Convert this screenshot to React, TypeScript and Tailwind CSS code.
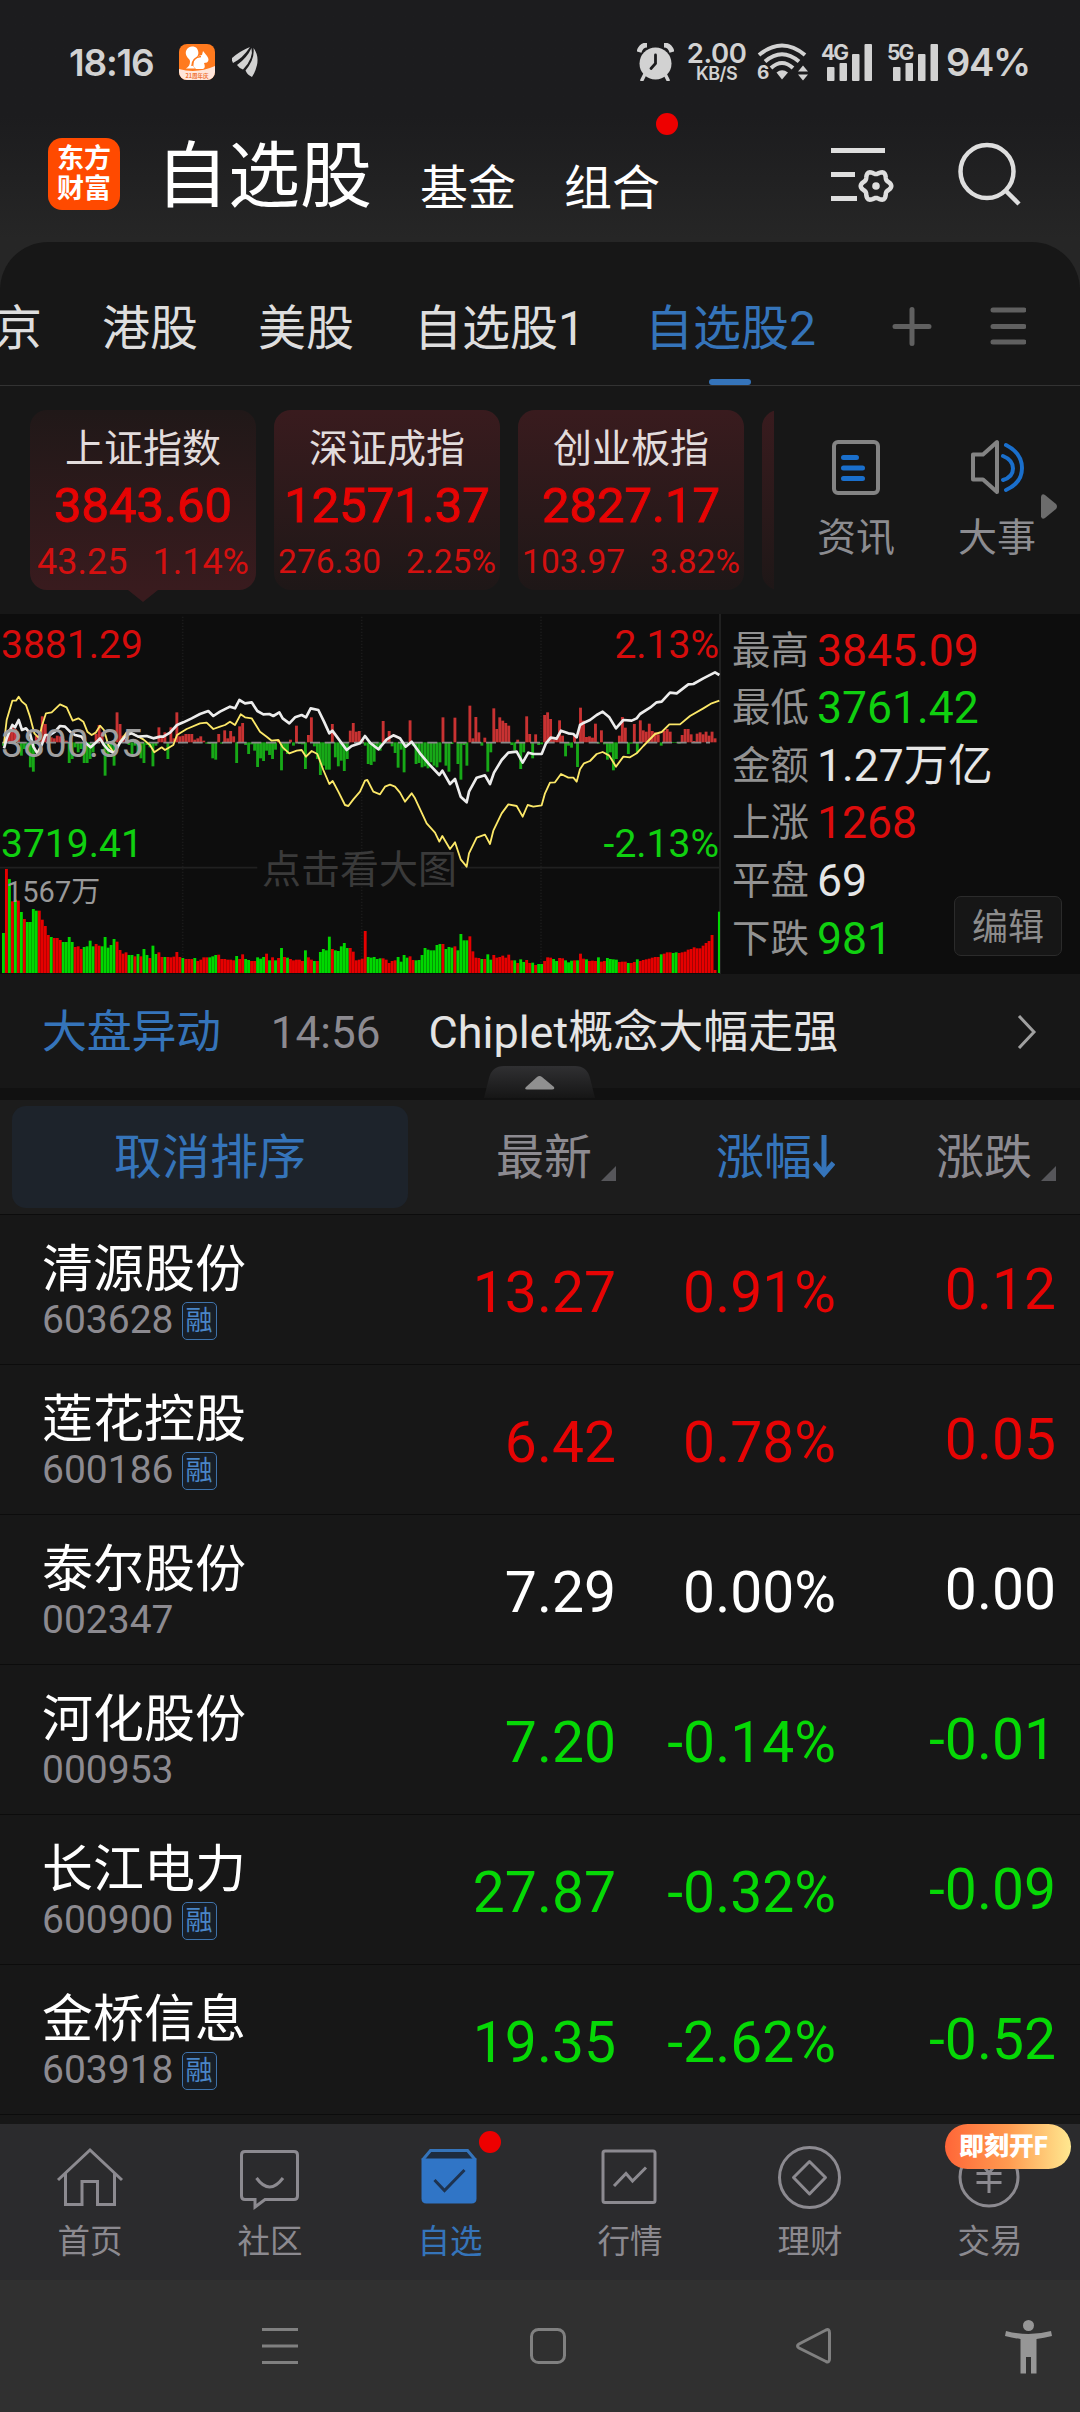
import type { ReactNode } from "react";

type IndexCard = { name: string; price: string; change: string; percent: string; active?: boolean };
type Stock = { name: string; code: string; margin: boolean; price: string; percent: string; change: string };

const indexCards: IndexCard[] = [
  { name: "上证指数", price: "3843.60", change: "43.25", percent: "1.14%", active: true },
  { name: "深证成指", price: "12571.37", change: "276.30", percent: "2.25%" },
  { name: "创业板指", price: "2827.17", change: "103.97", percent: "3.82%" },
];

const stats = [
  { label: "最高", value: "3845.09", color: "text-[#dc0c0c]" },
  { label: "最低", value: "3761.42", color: "text-[#10d010]" },
  { label: "金额", value: "1.27万亿", color: "text-[#e6e6e6]" },
  { label: "上涨", value: "1268", color: "text-[#dc0c0c]" },
  { label: "平盘", value: "69", color: "text-[#e6e6e6]" },
  { label: "下跌", value: "981", color: "text-[#10d010]" },
];

const stocks: Stock[] = [
  { name: "清源股份", code: "603628", margin: true, price: "13.27", percent: "0.91%", change: "0.12" },
  { name: "莲花控股", code: "600186", margin: true, price: "6.42", percent: "0.78%", change: "0.05" },
  { name: "泰尔股份", code: "002347", margin: false, price: "7.29", percent: "0.00%", change: "0.00" },
  { name: "河化股份", code: "000953", margin: false, price: "7.20", percent: "-0.14%", change: "-0.01" },
  { name: "长江电力", code: "600900", margin: true, price: "27.87", percent: "-0.32%", change: "-0.09" },
  { name: "金桥信息", code: "603918", margin: true, price: "19.35", percent: "-2.62%", change: "-0.52" },
];

// one entry per minute: volume, negative = falling minute
const volumes = [
  -120, 312, -282, 215, -220, 217, -183, 162, -153, -153, -192, -187, 187, 160, 141, 114, -108, 105, 105, 99,
  -93, -93, -108, -93, 78, 80, 72, -78, -80, -97, -80, 87, 82, -80, -108, -76, -84, -102, 94, 69,
  58, 62, -54, -54, 50, -57, 50, -72, -54, 45, -82, -57, 62, 48, -48, 48, 47, 49, 63, 48,
  -45, 42, 42, 42, -45, 36, 40, 47, 47, -47, -50, -54, 55, 42, 42, 40, 40, 38, -51, 42,
  56, -42, -39, 36, 36, -47, -43, -48, 58, -38, 47, -38, 45, -75, 48, -46, 42, 38, 40, 40,
  36, -68, 47, 40, -36, 36, -63, -72, -68, -109, 72, -68, -66, -80, -90, -75, 75, 64, 38, 40,
  43, 126, -48, -46, -48, -42, -44, 44, 40, 30, 36, 38, -48, -34, -54, -46, 50, 39, -38, -39,
  -54, -75, -70, -68, -68, -84, -87, 87, -72, -78, -76, 80, -68, -117, -98, -98, 110, 65, 46, 45,
  -42, 42, -56, -40, 54, 46, 48, 52, 46, 55, 38, -38, 30, -41, -33, 39, 30, -31, 24, -27,
  -27, 36, 47, 46, -42, -36, 45, 44, -38, -32, -37, 38, -38, 58, 43, -41, 36, 37, 36, -47,
  34, 36, -45, -42, -41, -40, 33, 34, 34, -30, 30, 33, -41, 36, 39, 41, 43, 46, 48, 48,
  -56, 58, 62, 62, -60, -62, 60, 62, 64, 70, 72, 77, 74, 74, 82, 90, 96, 114, 9, -184,
];

// minute momentum around the previous close
const momentum = [
  -10, 15, 40, 50, 40, 25, -40, -20, -10, -75, -88, 20, 25, 78, 55, 20, 15, 12, 20, 18,
  10, 5, -62, -50, -15, -30, -20, -62, -62, -50, -30, 25, 52, 30, -100, -40, -20, -70, 90, 55,
  20, 10, -8, -40, -10, -35, -48, -62, -8, -15, -72, -10, 45, 15, 30, -50, 45, 12, 90, 18,
  20, 25, 25, 25, 8, 12, 18, 5, -4, -5, -48, -52, 25, -4, 36, 12, 34, 18, -62, 48,
  58, -8, -35, -6, -25, -74, -48, -56, -25, -38, -50, -22, 8, -84, -25, -35, 8, -10, 50, -5,
  -6, -80, 22, 75, -12, -50, -98, -70, -82, -82, 55, -45, -72, -55, -86, -50, 35, 58, 32, 34,
  10, -10, -65, -68, -58, -20, -25, 64, 10, 34, -12, -32, -76, -22, -90, -8, 66, -10, -65, -62,
  -75, -72, -78, -60, -70, -75, -60, 75, -70, -88, -5, 74, -65, -112, -8, -70, 110, 12, 76, 30,
  -10, 14, -88, -30, 102, 40, 75, 65, 58, 50, -8, -24, 8, -80, -30, 78, 25, -48, 24, -8,
  -6, 82, 90, 70, 8, 12, 66, 20, -42, -10, -16, 20, -74, 104, 65, 16, 18, 14, 56, -4,
  36, -6, -52, -30, -84, -50, 20, 76, 44, -35, -4, 55, -30, 66, 36, 32, 56, 34, 30, 24,
  -10, 34, 40, 32, -2, -2, -4, 22, 40, 40, 24, 4, 26, 30, 24, 32, 20, 32, 12, 0,
];

const priceLine =
  "12,415 20,385 28,365 37,345 45,352 56,330 66,360 78,355 90,370 100,410 112,430 125,405 136,375 150,375 165,365 180,348 195,350 210,365 225,375 245,380 258,400 272,412 285,400 300,385 312,405 325,420 343,430 360,398 380,375 395,370 415,380 440,378 460,385 480,380 490,380 510,368 531,345 550,337 575,325 600,312 625,303 640,318 660,305 690,290 705,295 718,270 735,280 755,277 772,303 790,313 808,312 820,318 838,307 848,325 868,340 885,322 905,315 918,322 932,295 955,300 972,335 988,370 997,362 1012,382 1040,420 1055,408 1080,400 1095,378 1110,398 1135,418 1160,388 1180,376 1200,385 1217,410 1235,395 1260,430 1285,460 1318,495 1327,482 1350,522 1365,507 1382,560 1400,577 1407,545 1430,503 1455,496 1470,522 1482,488 1505,450 1525,428 1550,425 1568,458 1585,428 1600,432 1625,432 1638,400 1652,383 1670,386 1683,362 1705,370 1720,372 1730,382 1740,345 1752,338 1770,330 1790,315 1808,305 1828,322 1848,355 1870,330 1895,332 1910,325 1920,312 1950,293 1970,277 1985,275 2010,248 2030,250 2065,223 2080,222 2110,205 2145,187 2158,195";

const averageLine =
  "12,400 20,330 37,272 48,272 56,260 66,275 78,285 90,320 103,370 118,385 125,350 138,310 155,307 180,283 200,292 218,332 235,325 250,335 262,365 275,375 287,368 300,347 312,360 325,405 343,430 360,395 380,367 400,372 430,388 450,405 463,427 485,412 495,420 520,405 531,375 560,357 600,340 620,338 640,357 660,350 675,345 690,335 705,345 722,313 735,322 755,325 780,365 800,380 815,392 835,390 848,412 868,430 890,422 905,420 918,440 935,423 952,432 970,480 988,522 998,513 1015,545 1035,585 1045,588 1060,568 1080,545 1095,512 1102,510 1120,545 1140,553 1155,530 1170,524 1185,530 1200,548 1215,575 1235,550 1245,565 1280,640 1305,668 1318,695 1327,678 1350,717 1365,697 1382,748 1400,770 1407,730 1430,683 1455,674 1470,702 1480,662 1505,610 1525,583 1550,588 1568,620 1583,585 1600,590 1625,586 1635,550 1650,518 1665,517 1683,492 1705,503 1720,503 1730,515 1740,478 1752,460 1770,453 1790,432 1808,426 1828,437 1848,470 1870,440 1890,442 1910,430 1930,408 1965,372 1985,366 2008,343 2040,343 2070,318 2110,295 2135,280 2158,272";

// six-lobed cog outline
const cogPoints = Array.from({ length: 72 }, (_, i) => {
  const a = (i * Math.PI) / 36;
  const r = 13.6 + 1.7 * Math.cos(6 * a);
  return `${(45 + r * Math.cos(a)).toFixed(2)},${(44 + r * Math.sin(a)).toFixed(2)}`;
}).join(" ");

const trendColor = (value: string) => {
  if (value.startsWith("-")) return "text-[#06d806]";
  return parseFloat(value) === 0 ? "text-white" : "text-[#e60404]";
};

function SignalBars({ label }: { label: string }) {
  return (
    <div className="relative h-[37px] w-[51px]">
      <span className="absolute -top-[1px] left-0 font-[Inter] text-[21px] leading-[19px] font-bold tracking-[-2px]">{label}</span>
      <svg className="absolute right-0 bottom-0" width="45" height="37" fill="#d2d2d2">
        <rect x="0" y="23" width="7.5" height="14" rx="1" />
        <rect x="12.5" y="19" width="7.5" height="18" rx="1" />
        <rect x="25" y="10" width="7.5" height="27" rx="1" />
        <rect x="37.5" y="0" width="7.5" height="37" rx="1" />
      </svg>
    </div>
  );
}

function StatusBar() {
  return (
    <div className="flex h-[124px] items-center pr-[50px] pl-[69px] font-[Inter] text-[#d2d2d2]">
      <span className="w-[110px] text-[37px] leading-none font-semibold tracking-[-1.2px]">18:16</span>
      <svg width="36" height="36" viewBox="0 0 36 36">
        <rect width="36" height="36" rx="8" fill="#ff7a1e" />
        <path d="M0 25q18 5 36-3v6a8 8 0 0 1-8 8H8a8 8 0 0 1-8-8z" fill="#ffe6da" />
        <path d="M13 2.500c-4 0-7 4-6 8 1 4 4 4 4 7 0 3-1 5-4 7h9c-3-3-3-8 1-11 3-2 3-6 1-9-1-1.500-3-2-5-2z" fill="#fff" />
        <path d="M15 17q4-6 8-6l1-4 4 5q3 4 0 6.500l-3 .5q2 5-1 6h-7q-4-3-2-8z" fill="#fff" />
        <path d="M13 22c0-5 3-9 9-9.500" stroke="#ff7a1e" strokeWidth="1.500" fill="none" />
        <text x="18" y="33.500" fontSize="5.500" fontWeight="700" textAnchor="middle" fill="#f0763a" fontFamily="Noto Sans CJK SC, sans-serif">
          21周年庆
        </text>
      </svg>
      <svg className="ml-[17px]" width="26" height="30" viewBox="0 0 26 30" fill="#d2d2d2">
        <path d="M0 11Q8 4 18 0Q11 11 1 16Q-.5 13 0 11z" />
        <path d="M5 18Q15 11 19.500 1Q22 11 11 22.500Q7 21 5 18z" />
        <path d="M13.500 23.500Q23 12 21.500 1Q27 8 25 18Q23 26 20 30Q15.500 28 13.500 23.500z" />
      </svg>
      <div className="flex-1" />
      <svg width="37" height="38" viewBox="0 0 37 38">
        <path d="M8 31l-3 6M28 31l3 6" stroke="#d2d2d2" strokeWidth="3.500" strokeLinecap="round" />
        <circle cx="18.500" cy="20.500" r="16" fill="#d2d2d2" />
        <path d="M2 9Q4 2 10 2M35 9Q33 2 27 2" stroke="#d2d2d2" strokeWidth="5" fill="none" />
        <path d="M18.500 12v8.500l-4.500 5" stroke="#1c1c1e" strokeWidth="2.800" fill="none" strokeLinecap="round" />
      </svg>
      <div className="ml-[13px] flex w-[59px] flex-col items-center font-semibold">
        <span className="text-[27.5px] leading-[24px] tracking-[-0.4px]">2.00</span>
        <span className="text-[18px] leading-[18px] tracking-[-0.5px]">KB/S</span>
      </div>
      <div className="relative ml-[11px] h-[38px] w-[52px]">
        <span className="absolute -bottom-[1px] left-0 text-[19px] leading-[18px] font-bold">6</span>
        <svg className="absolute inset-0" width="52" height="38" viewBox="0 0 52 38" fill="none" stroke="#d2d2d2" strokeWidth="4">
          <path d="M2 12Q25-7 48 12" />
          <path d="M8 18.500Q25 4 42 18.500" />
          <path d="M14 25Q25 15 36 25" />
          <path d="M19.500 29.500Q25 25 31 29.500L25 36.500z" fill="#d2d2d2" stroke="none" />
          <path d="M41 28.500h10l-5-6zM41 31.500h10l-5 6z" fill="#d2d2d2" stroke="none" />
        </svg>
      </div>
      <div className="ml-3 flex gap-[15px]">
        <SignalBars label="4G" />
        <SignalBars label="5G" />
      </div>
      <span className="ml-[8px] text-[38px] leading-none font-semibold tracking-[-1.3px]">94%</span>
    </div>
  );
}

function TitleBar() {
  return (
    <div className="flex h-[118px] items-start pl-12 text-white">
      <div className="mt-[14px] flex h-[72px] w-[72px] flex-col items-center justify-center rounded-[14px] bg-[#ff4a00] text-[27px] leading-[30px] font-bold">
        <span>东方</span>
        <span>财富</span>
      </div>
      <h1 className="ml-9 pt-[3px] text-[72px] leading-[100px]">自选股</h1>
      <span className="ml-[48px] pt-[35px] text-[48px] leading-[60px]">基金</span>
      <div className="relative ml-12 pt-[35px] text-[48px] leading-[60px]">
        组合
        <span className="absolute -top-[11px] left-[92px] h-[22px] w-[22px] rounded-full bg-[#ee0000]" />
      </div>
      <svg className="mt-[18px] ml-[171px]" width="64" height="64" viewBox="0 0 64 64" fill="none" stroke="#dedede" strokeWidth="5">
        <path d="M0 8.500h54M0 32.500h24M0 56.500h26" />
        <polygon points={cogPoints} strokeWidth="4.500" strokeLinejoin="round" />
        <circle cx="45" cy="44" r="3.800" fill="#dedede" stroke="none" />
      </svg>
      <svg className="mt-[18px] ml-[63px]" width="64" height="64" viewBox="0 0 64 64" fill="none" stroke="#dedede" strokeWidth="4.500">
        <circle cx="29" cy="29.500" r="26.500" />
        <path d="M47 48l14 14" />
      </svg>
    </div>
  );
}

function GroupTabs() {
  return (
    <div className="relative flex h-[144px] items-start border-b border-[#333] pt-[57px] text-[48px] leading-[60px] whitespace-nowrap text-[#dedede]">
      <div className="-ml-[6px] flex gap-[60px]">
        <span>京</span>
        <span>港股</span>
        <span>美股</span>
        <span>自选股1</span>
        <div className="relative text-[#3574ba]">
          自选股2
          <span className="absolute top-[80px] left-[64px] h-[6px] w-[42px] rounded-full bg-[#3574ba]" />
        </div>
      </div>
      <div className="flex-1" />
      <svg className="mt-[8px] mr-[54px]" width="136" height="40" viewBox="0 0 136 40" stroke="#606060" strokeWidth="5" strokeLinecap="round">
        <path d="M5 19.500h34M22 2.500v34M103 3h31M103 19.500h31M103 35h31" />
      </svg>
    </div>
  );
}

function Card({ card }: { card: IndexCard }) {
  return (
    <div
      className={`relative flex h-[180px] w-[226px] shrink-0 flex-col items-center rounded-[17px] whitespace-nowrap ${
        card.active ? "bg-linear-to-b from-[#201818] to-[#391b1e]" : "bg-linear-to-b from-[#391b1e] to-[#1e1717]"
      }`}
    >
      <span className="mt-[15px] text-[39px] leading-[48px] text-[#e2dcdc]">{card.name}</span>
      <span className="mt-[5px] text-[49px] leading-[56px] text-[#e60404] [-webkit-text-stroke:1px_#e60404]">{card.price}</span>
      <div
        className={`mt-[8px] flex gap-[25px] leading-[40px] text-[#d41010] ${card.active ? "text-[36px]" : "text-[33.5px]"}`}
      >
        <span>{card.change}</span>
        <span>{card.percent}</span>
      </div>
      {card.active && (
        <svg className="absolute top-[180px] left-[98px]" width="30" height="12" fill="#391b1e">
          <path d="M0 0h30L15 12z" />
        </svg>
      )}
    </div>
  );
}

function IndexStrip() {
  return (
    <div className="flex h-[228px] pt-6">
      <div className="flex w-[774px] gap-[18px] overflow-hidden pl-[30px]">
        {indexCards.map((card) => (
          <Card key={card.name} card={card} />
        ))}
        <div className="h-[180px] w-[226px] shrink-0 rounded-[17px] bg-linear-to-b from-[#391b1e] to-[#1e1717]" />
      </div>
      <div className="flex pt-[29px] pl-[41px] text-[39px] leading-[48px] text-[#8c8c90]">
        <div className="flex w-[82px] flex-col items-center">
          <svg width="48" height="56" viewBox="0 0 48 56" fill="none">
            <rect x="2" y="3" width="44" height="51" rx="4" stroke="#848484" strokeWidth="4" />
            <path d="M11.500 18.500h13M11.500 29h19M11.500 39.500h19" stroke="#1a6fcc" strokeWidth="5" strokeLinecap="round" />
          </svg>
          <span className="mt-[19px] whitespace-nowrap">资讯</span>
        </div>
        <div className="ml-[59px] flex w-[82px] flex-col items-center">
          <svg width="56" height="56" viewBox="0 0 56 56" fill="none" strokeWidth="4">
            <path d="M4 15.500h10L28 3v50L14 40.500H4z" stroke="#848484" strokeLinejoin="round" />
            <path d="M34 17q10 4 10 12.500T34 41M37 6q16 8 16 23T37 51" stroke="#1a6fcc" strokeLinecap="round" />
          </svg>
          <span className="mt-[19px] whitespace-nowrap">大事</span>
        </div>
        <svg className="mt-[55px] ml-[3px]" width="16" height="25" viewBox="0 0 16 25" fill="#6c6c6c">
          <path d="M0 2.500Q1-1 4 1l11 9q2 2.500 0 5L4 24q-3 2-4-1.500z" />
        </svg>
      </div>
    </div>
  );
}

function MinuteChart() {
  const step = 8.97;
  return (
    <div className="relative h-[360px] w-[721px] shrink-0 border-r-2 border-[#202020] text-[39px] leading-[48px]">
      <svg className="absolute inset-0" width="720" height="360" viewBox="0 12 2160 1080" fill="none">
        <path d="M548 20v1068M1085 20v1068M1623 20v1068" stroke="#1f1f1f" strokeWidth="5" strokeDasharray="3 6" />
        <path d="M0 773h772M1383 773h777" stroke="#202020" strokeWidth="5" />
        {volumes.map((v, i) => (
          <rect key={i} x={6 + i * step + (i === 239 ? 4 : 0)} y={1089 - Math.abs(v)} width="8.6" height={Math.abs(v)} fill={v > 0 ? "#e60000" : "#00d800"} />
        ))}
        {momentum.map((m, i) => (
          <rect key={i} x={6 + i * step} y={m > 0 ? 397 - m : 397} width="8.6" height={Math.abs(m)} fill={m > 0 ? "#c83232" : "#17a817"} />
        ))}
        <path d="M6 398H2130" stroke="#8a8a8a" strokeWidth="5" strokeDasharray="30 14" />
        <polyline points={averageLine} stroke="#fce868" strokeWidth="5.5" strokeLinejoin="round" />
        <polyline points={priceLine} stroke="#ececec" strokeWidth="8" strokeLinejoin="round" />
      </svg>
      <span className="absolute top-[7px] left-px text-[#d60c0c]">3881.29</span>
      <span className="absolute top-[7px] right-0 text-[#d60c0c]">2.13%</span>
      <span className="absolute top-[106px] left-px text-[#a0a0a0]">3800.35</span>
      <span className="absolute top-[206px] left-px text-[#10d010]">3719.41</span>
      <span className="absolute top-[206px] right-0 text-[#10d010]">-2.13%</span>
      <span className="absolute top-[232px] left-[262px] text-[#3a3a3a]">点击看大图</span>
      <span className="absolute top-[254px] left-[6px] text-[29px] text-[#999]">1567万</span>
    </div>
  );
}

function MarketStats() {
  return (
    <div className="relative flex-1 pt-[8px] pl-[11px]">
      {stats.map((s) => (
        <div key={s.label} className="flex h-[57.6px] items-center">
          <span className="text-[38.5px] leading-none text-[#929292]">{s.label}</span>
          <span className={`ml-[8px] text-[44.5px] leading-none ${s.color}`}>{s.value}</span>
        </div>
      ))}
      <button className="absolute right-[18px] bottom-[18px] h-[60px] w-[108px] rounded-[7px] border border-[#2b2b2b] bg-[#161616] pt-[2px] text-[36px] leading-[58px] text-[#8c8c8c]">
        编辑
      </button>
    </div>
  );
}

function NewsRow() {
  return (
    <div className="relative flex h-[114px] items-center bg-[#171717] pt-[3px] pl-[42px] text-[45px] leading-none">
      <span className="tracking-[-0.3px] text-[#3574ba]">大盘异动</span>
      <span className="ml-[50px] text-[44px] text-[#8c8a90]">14:56</span>
      <span className="ml-[48px] text-[#e4e4e4]">Chiplet概念大幅走强</span>
      <svg className="absolute top-[41px] right-[43px]" width="20" height="34" viewBox="0 0 20 34" fill="none" stroke="#a0a0a0" strokeWidth="3">
        <path d="M2 1l15 16L2 33" />
      </svg>
      <svg className="absolute top-[92px] left-[484px]" width="111" height="32" viewBox="0 0 111 32">
        <defs>
          <linearGradient id="handle" x1="0" y1="0" x2="0" y2="1">
            <stop offset="0" stopColor="#303032" />
            <stop offset="1" stopColor="#161616" />
          </linearGradient>
        </defs>
        <path d="M0 32L5 12Q8 0 20 0H91Q103 0 106 12L111 32z" fill="url(#handle)" />
        <path d="M42 21L53 11Q55.500 9 58 11L70 21Q71 23.500 68 23.500H43Q40 23.500 42 21z" fill="#909090" />
      </svg>
    </div>
  );
}

function SortMark() {
  return (
    <svg className="mt-[32px] ml-[9px]" width="15" height="15" fill="#56565a">
      <path d="M15 0v15H0z" />
    </svg>
  );
}

function TableHeader() {
  return (
    <div className="flex h-[115px] items-center border-b border-[#0c0c0c] bg-[#1c1c1c] pl-3 text-[48px] leading-[60px] text-[#8c8a90]">
      <button className="h-[102px] w-[396px] rounded-[14px] bg-[#1d232b] pt-[2px] text-[#3574ba]">取消排序</button>
      <div className="flex w-[208px] items-center justify-end">
        <span className="pt-[2px]">最新</span>
        <SortMark />
      </div>
      <div className="flex w-[219px] items-center justify-end text-[#3574ba]">
        <span className="pt-[2px]">涨幅</span>
        <svg className="ml-[1px]" width="22" height="44" viewBox="0 0 22 44" fill="none" stroke="#3574ba">
          <path d="M11 0v38" strokeWidth="5" />
          <path d="M1.500 28L11 39L20.500 28" strokeWidth="5" />
        </svg>
      </div>
      <div className="flex w-[221px] items-center justify-end">
        <span className="pt-[2px]">涨跌</span>
        <SortMark />
      </div>
    </div>
  );
}

function StockRow({ stock }: { stock: Stock }) {
  const color = trendColor(stock.percent);
  return (
    <div className="flex h-[150px] border-b border-[#0c0c0c] pl-[42px]">
      <div className="w-[354px] pt-[25px]">
        <div className="text-[51px] leading-[60px] text-white">{stock.name}</div>
        <div className="flex h-[40px] items-center">
          <span className="text-[39px] leading-none text-[#8c8a90]">{stock.code}</span>
          {stock.margin && (
            <span className="mt-[2px] ml-[8px] flex h-[38px] w-[35px] items-center justify-center rounded-[5px] border border-[#3f73ab] bg-[#171e27] text-[27px] leading-none text-[#4a86c8]">
              融
            </span>
          )}
        </div>
      </div>
      <span className={`w-[220px] pt-[39px] text-right text-[57px] leading-[78px] ${color}`}>{stock.price}</span>
      <span className={`w-[220px] pt-[39px] text-right text-[57px] leading-[78px] ${color}`}>{stock.percent}</span>
      <span className={`w-[220px] pt-[36px] text-right text-[57px] leading-[78px] ${color}`}>{stock.change}</span>
    </div>
  );
}

function NavItem({ label, active, children, extra }: { label: string; active?: boolean; children: ReactNode; extra?: ReactNode }) {
  return (
    <div className={`relative flex flex-1 flex-col items-center pt-[21px] ${active ? "text-[#3574ba]" : "text-[#8c8a90]"}`}>
      <svg width="64" height="64" viewBox="0 0 64 64" className="overflow-visible" fill="none" stroke="currentColor" strokeWidth="3">
        {children}
      </svg>
      <span className="mt-[13px] text-[32.5px] leading-[40px]">{label}</span>
      {extra}
    </div>
  );
}

function BottomNav() {
  return (
    <div className="flex h-[156px] bg-[#2b2b2d]">
      <NavItem label="首页">
        <path d="M0 35L32 5l32 30M7.500 28v31.500H24V36.500h15.500v23h17V28" />
      </NavItem>
      <NavItem label="社区">
        <path d="M7 6.500h49q3.500 0 3.500 3.500v41q0 3.500-3.500 3.500H27L17 62v-7.500H7q-3.500 0-3.500-3.500V10Q3.500 6.500 7 6.500z" />
        <path d="M18.500 33Q31.500 51 45 33" />
      </NavItem>
      <NavItem
        label="自选"
        active
        extra={<span className="absolute top-[7px] left-[119px] h-[22px] w-[22px] rounded-full bg-[#ee0000]" />}
      >
        <path d="M4.500 15L12.500 5.500h37L57.500 15" fill="#1e2c3e" />
        <path d="M3.500 13.500h55v40q0 5-5 5h-45q-5 0-5-5z" fill="#3075c6" stroke="none" />
        <path d="M16.500 35l10 10.500L46.500 25" stroke="#1e3350" />
      </NavItem>
      <NavItem label="行情">
        <rect x="5" y="6" width="52" height="51.500" rx="2" />
        <path d="M16 41l12-12.500 6.500 7.500L48 22.500" />
      </NavItem>
      <NavItem label="理财">
        <circle cx="31.500" cy="32.500" r="30" />
        <path d="M31.500 16.500l16 16-16 16.500-16-16.500z" strokeLinejoin="round" />
      </NavItem>
      <NavItem
        label="交易"
        extra={
          <span className="absolute top-0 left-[45px] h-[45px] w-[126px] rounded-full bg-linear-to-r from-[#ff6538] via-[#ff9a50] to-[#ffe890] pl-[14px] text-[25px] leading-[46px] font-black text-white">
            即刻开F
          </span>
        }
      >
        <circle cx="31" cy="32" r="29" />
        <path d="M22 17l9 11 9-11M18.500 28.500h25M18.500 37.500h25M31 28v20" />
      </NavItem>
    </div>
  );
}

function SystemNav() {
  return (
    <div className="flex h-[132px] items-start bg-[#303030] pt-10 pl-[262px]">
      <svg className="mt-2" width="36" height="36" stroke="#808080" strokeWidth="3">
        <path d="M0 1.500h36M0 18h36M0 34.500h36" />
      </svg>
      <svg className="mt-2 ml-[232px]" width="36" height="36" fill="none" stroke="#808080" strokeWidth="3">
        <rect x="1.500" y="1.500" width="33" height="33" rx="7" />
      </svg>
      <svg className="mt-2 ml-[230px]" width="36" height="36" fill="none" stroke="#808080" strokeWidth="3">
        <path d="M30 2Q33.500.5 33.500 5v26q0 4-3.500 2.500L3 20q-3-2 0-4z" />
      </svg>
      <svg className="ml-[173px]" width="47" height="54" viewBox="0 0 47 54" fill="#969696">
        <circle cx="23.500" cy="5.500" r="5.500" />
        <path d="M1 11Q23.500 17 46 11l1 5q-8 2-15.500 3v34.500h-5.500V37h-5v16.500h-5.500V19Q8 18 0 16z" />
      </svg>
    </div>
  );
}

export default function App() {
  return (
    <div className="h-[2412px] w-[1080px] overflow-hidden bg-[#171717] font-[Roboto,'Noto_Sans_CJK_SC',sans-serif]">
      <div className="bg-linear-to-b from-[#1c1c1e] from-30% to-[#262626] to-62%">
        <StatusBar />
        <TitleBar />
        <div className="rounded-t-[48px] bg-[#171717]">
          <GroupTabs />
        </div>
      </div>
      <IndexStrip />
      <div className="flex h-[360px] bg-[#0d0d0d]">
        <MinuteChart />
        <MarketStats />
      </div>
      <NewsRow />
      <div className="h-3 bg-[#111]" />
      <TableHeader />
      <div className="h-[909px]">
        {stocks.map((stock) => (
          <StockRow key={stock.code} stock={stock} />
        ))}
      </div>
      <BottomNav />
      <SystemNav />
    </div>
  );
}
